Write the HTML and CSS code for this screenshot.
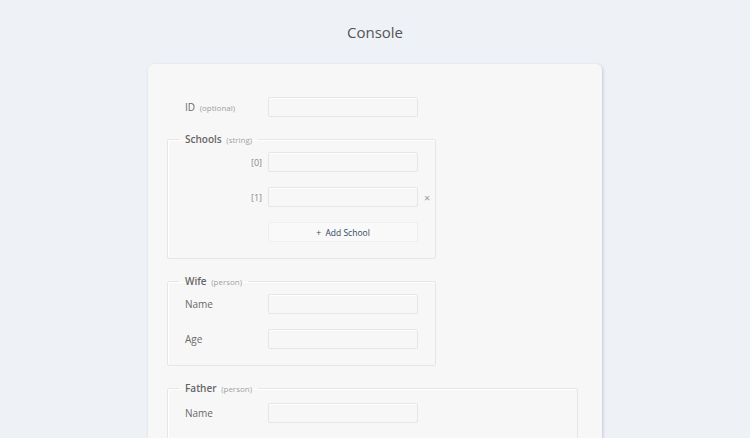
FILE: index.html
```html
<!DOCTYPE html>
<html lang="en">
<head>
    <meta charset="UTF-8">
    <meta name="viewport" content="width=device-width, initial-scale=1.0">
    <title>Console</title>
    <link rel="stylesheet" href="styles.css">
</head>
<body>

    <h1 class="title">Console</h1>

    <div class="card">
        <!-- ID -->
        <div class="row top-row">
            <label class="label">ID <span class="hint">(optional)</span></label>
            <input class="field" type="text">
        </div>

        <!-- Schools -->
        <fieldset class="group narrow">
            <legend>Schools <span class="hint">(string)</span></legend>
            <div class="row">
                <label class="label index">[0]</label>
                <input class="field" type="text">
            </div>
            <div class="row">
                <label class="label index">[1]</label>
                <input class="field" type="text">
                <span class="remove">&times;</span>
            </div>
            <div class="row">
                <span class="label"></span>
                <button class="add-btn">+&nbsp; Add School</button>
            </div>
        </fieldset>

        <!-- Wife -->
        <fieldset class="group narrow">
            <legend>Wife <span class="hint">(person)</span></legend>
            <div class="row">
                <label class="label">Name</label>
                <input class="field" type="text">
            </div>
            <div class="row">
                <label class="label">Age</label>
                <input class="field" type="text">
            </div>
        </fieldset>

        <!-- Father -->
        <fieldset class="group father">
            <legend>Father <span class="hint">(person)</span></legend>
            <div class="row">
                <label class="label">Name</label>
                <input class="field" type="text">
            </div>
        </fieldset>
    </div>

</body>
</html>
```

FILE: styles.css
```css
/* General */
body {
    margin: 0;
    background-color: #eef1f5;
    font-family: 'Open Sans', 'Liberation Sans', sans-serif;
    color: #666;
}

.title {
    margin: 22px 0 0;
    font-size: 15px;
    line-height: 20px;
    font-weight: 400;
    color: #555;
    text-align: center;
}

/* Main card */
.card {
    width: 454px;
    box-sizing: border-box;
    margin: 22px auto 0;
    padding: 33px 24px 20px 19px;
    background-color: #f7f7f7;
    border-radius: 6px 6px 0 0;
    box-shadow: 1px 1px 3px rgba(120, 120, 190, 0.35);
}

/* Rows */
.row {
    display: flex;
    align-items: center;
    margin-bottom: 15px;
}

.row:last-child {
    margin-bottom: 0;
}

.top-row {
    padding-left: 18px;
    margin-bottom: 15px;
}

.label {
    width: 83px;
    flex: none;
    font-size: 10px;
    color: #6a6a6a;
}

.label.index {
    text-align: right;
    box-sizing: border-box;
    padding-right: 6px;
    color: #888;
    font-size: 9px;
}

.hint {
    font-size: 8px;
    color: #a0a0a0;
    margin-left: 2px;
}

.field {
    width: 150px;
    height: 20px;
    box-sizing: border-box;
    margin: 0;
    padding: 0 6px;
    border: 1px solid #e6e6e6;
    border-radius: 2px;
    background-color: #f7f7f7;
    box-shadow: inset 0 1px 0 #fff;
    outline: none;
}

.remove {
    margin-left: 6px;
    font-size: 11px;
    color: #999;
}

.add-btn {
    width: 150px;
    height: 20px;
    margin: 0;
    padding: 0;
    border: 1px solid #efefef;
    border-radius: 2px;
    background-color: #f9f9f9;
    color: #2f4660;
    font-family: inherit;
    font-size: 8.5px;
    cursor: pointer;
}

/* Fieldsets */
.group {
    min-width: 0;
    margin: 0 0 15px;
    padding: 6px 17px 16px;
    border: 1px solid #e6e6e6;
    box-shadow: inset 1px 1px 0 #fff;
    border-radius: 2px;
}

.group legend {
    margin-left: -6px;
    padding: 0 6px;
    font-size: 10px;
    font-weight: 600;
    color: #666;
}

.group legend .hint {
    font-weight: 400;
}

.narrow {
    width: 269px;
    box-sizing: border-box;
}

.father {
    padding-top: 8px;
}
```
